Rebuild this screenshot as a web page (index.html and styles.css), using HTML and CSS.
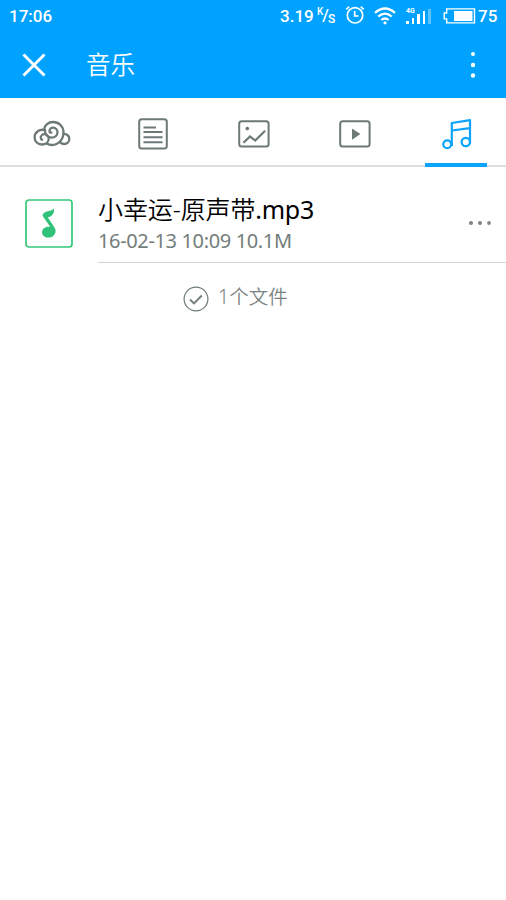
FILE: index.html
```html
<!DOCTYPE html>
<html lang="zh-CN">
<head>
<meta charset="utf-8">
<title>音乐</title>
<link rel="stylesheet" href="styles.css">
</head>
<body>
<div class="status">
  <span class="time">17:06</span>
  <span class="speed">3.19</span>
  <span class="unit"><span class="unit-k">K</span><span class="unit-slash">/</span><span class="unit-s">S</span></span>
  <svg class="alarm" width="20" height="20" viewBox="0 0 20 20" fill="none" stroke="#fff" stroke-width="1.7"><circle cx="10" cy="10.3" r="7.7"/><path d="M9.7 6v5h3.8M1.3 4.3 4.2 1.6M18.7 4.3l-2.9-2.7"/></svg>
  <svg class="wifi" width="22" height="18" viewBox="0 0 22 18" fill="none" stroke="#fff" stroke-width="2.2"><path d="M1 5.8Q11-2.8 21 5.8M4.2 9.5q6.8-5.600 13.600 0M7.300 13q3.700-3 7.400 0"/><circle cx="11" cy="15.800" r="1.600" fill="#fff" stroke="none"/></svg>
  <span class="signal"><span class="network">4G</span><i class="bar b1"></i><i class="bar b2"></i><i class="bar b3"></i><i class="bar b4"></i><i class="bar b5"></i></span>
  <svg class="battery" width="33" height="16" viewBox="0 0 33 16"><path d="M3.700.9h27.800v14H3.700v-4H1.200V5h2.500z" fill="none" stroke="#fff" stroke-width="1.400"/><path d="M11 3h18.500v10H11z" fill="#fff"/></svg>
  <span class="percent">75</span>
</div>
<header class="header">
  <svg width="24" height="24" viewBox="0 0 24 24" fill="none" stroke="#fff" stroke-width="2.900"><path d="m1.500 1.500 21 21m0-21-21 21"/></svg>
  <h1>音乐</h1>
  <svg class="more" width="6" height="28" viewBox="0 0 6 28" fill="#fff"><circle cx="3" cy="3" r="2"/><circle cx="3" cy="14" r="2.200"/><circle cx="3" cy="24.500" r="2.200"/></svg>
</header>
<nav class="tabs">
  <a class="tab"><svg width="38" height="28" viewBox="0 0 38 28" fill="none" stroke="#6d7977" stroke-width="2.300" stroke-linecap="round"><path d="M11 9.600C11.500 5 15.500 2 20 2c6 0 10.500 4.500 10.500 10.300 0 7-5 12.700-11.500 12.700-2 0-4-.6-5.500-1.500"/><path d="M12 10.100C6.500 8.600 1.600 12.300 1.600 17.500c0 4 3.200 7 7.200 7 4.100 0 6.900-2.500 6.900-5.700 0-2.700-1.900-4.600-4.200-4.600-2.200 0-3.800 1.600-3.800 3.400 0 1 .5 1.800 1.400 2.100"/><path d="M12 10.200c-.5 4.200 2.800 7.400 6.700 7.400 3.500 0 5.800-2.500 5.800-5.300 0-2.700-1.900-4.600-4.300-4.600-2.100 0-3.700 1.500-3.700 3.200 0 1.100.8 1.800 1.800 1.800"/><path d="M30.600 13.900c3.400.2 5.700 2.200 5.700 5.200 0 2.900-2.300 4.900-5.100 4.900-1.800 0-3-.6-4-1.800"/></svg></a>
  <a class="tab"><svg width="30" height="32" viewBox="0 0 30 32" fill="none" stroke="#6d7977" stroke-width="2"><rect x="1.200" y="1.200" width="27.600" height="29.300" rx="2.500"/><path d="M5.500 9.400H18M5.500 13.900h19M5.500 19.200h19M5.500 24.200h19"/></svg></a>
  <a class="tab"><svg width="32" height="28" viewBox="0 0 32 28" fill="none" stroke="#6d7977" stroke-width="2"><rect x="1.200" y="1.200" width="29.400" height="25.300" rx="2.500"/><path d="m5.400 22.800 6.600-6.400 5.200 4.200 9.900-9.900" stroke-width="2.200"/><circle cx="9.300" cy="8.600" r="1.800" fill="#6d7977" stroke="none"/></svg></a>
  <a class="tab"><svg width="32" height="28" viewBox="0 0 32 28" fill="none" stroke="#6d7977" stroke-width="2"><rect x="1.200" y="1.200" width="29.400" height="25.300" rx="2.500"/><path d="M13 8.500v11.200l8.400-5.600z" fill="#6d7977" stroke="none"/></svg></a>
  <a class="tab active"><svg width="30" height="32" viewBox="0 0 30 32" fill="none" stroke="#0ba3fb" stroke-width="2.200" stroke-linejoin="round"><circle cx="5.200" cy="26.300" r="3.900"/><circle cx="23.800" cy="24" r="4.200"/><path d="M9.800 28V5L28 2.200V25.500M9.800 12.500 28 10.200"/></svg></a>
</nav>
<main>
  <section class="file">
    <svg class="thumb" width="48" height="49" viewBox="0 0 48 49"><rect x="1" y="1" width="46" height="47" rx="3" fill="#fff" stroke="#34c878" stroke-width="1.700"/><path d="M17.500 16.800c.1-2 1.700-3.500 4.300-4.300 2.800-.8 5.700-1.100 7.200-3 .6 4.600-2.100 8.500-6.300 8.700l7.100 10.700c2.200 4-.4 9-5.300 9.600-4.300.5-7.500-2.100-7.500-5.300 0-3.500 3.500-6.200 8.200-5.400z" fill="#30c278"/></svg>
    <div class="details">
      <div class="text">
        <div class="name">小幸运-原声带<span class="ext">.mp3</span></div>
        <div class="meta">16-02-13 10:09 10.1M</div>
      </div>
      <svg width="24" height="6" viewBox="0 0 24 6" fill="#858585"><circle cx="3" cy="3" r="2.100"/><circle cx="12" cy="3" r="2.100"/><circle cx="21" cy="3" r="1.900"/></svg>
    </div>
  </section>
  <div class="summary">
    <svg width="26" height="26" viewBox="0 0 26 26" fill="none" stroke="#707c79"><circle cx="13" cy="13" r="11.900" stroke-width="1.200"/><path d="m7 13.500 4 4 7.800-8" stroke-width="1.800"/></svg>
    <span>1个文件</span>
  </div>
</main>
</body>
</html>
```

FILE: styles.css
```css
* { box-sizing: border-box; }
body { margin: 0; background: #fff; font-family: "Noto Sans", "Noto Sans CJK SC", sans-serif; }
svg { display: block; flex: none; }
.status { height: 32px; display: flex; align-items: center; padding-left: 9px; background: #00a2ff; color: #fff; font: 500 17px/32px Roboto, sans-serif; white-space: nowrap; }
.time { width: 271px; }
.speed { width: 37px; }
.unit { width: 19px; height: 20px; display: flex; font-size: 12px; line-height: 12px; }
.unit-k { font-size: 10px; }
.unit-slash { font-size: 17px; line-height: 19px; margin-left: -1px; }
.unit-s { padding-top: 7px; margin-left: -1px; }
.alarm { margin: -2px 0 0 9px; }
.wifi { margin-left: 9px; }
.signal { position: relative; display: flex; align-items: flex-end; gap: 3px; width: 25px; height: 16px; margin: 0 12px 0 10px; }
.network { position: absolute; left: 0; top: 0; font: bold 7px/7px Roboto, sans-serif; }
.bar { width: 2.500px; background: #fff; }
.b1 { height: 3px; } .b2 { height: 6px; } .b3 { height: 10px; } .b4 { height: 13px; }
.b5 { height: 15px; opacity: .35; }
.percent { margin-left: 2px; }
.header { height: 66px; display: flex; align-items: center; padding: 0 30px 0 22px; background: #00a2ff; color: #fff; }
h1 { margin: -2px 0 0 40px; font: 350 24.500px/36px "Noto Sans CJK SC", sans-serif; }
.more { margin-left: auto; }
.tabs { height: 69px; display: grid; grid-template-columns: repeat(5, 101px); padding-left: 1px; border-bottom: 2px solid #dedede; }
.tab { display: flex; height: 69px; padding-top: 3px; align-items: center; justify-content: center; }
.active { width: 62px; justify-self: center; border-bottom: 4px solid #0ba3fb; height: 69px; padding: 7px 0 0 3px; }
.file { height: 96px; display: flex; align-items: center; padding-left: 25px; }
.thumb { margin-top: 17px; }
.details { flex: 1; height: 96px; margin-left: 25px; padding: 17px 14px 0 0; display: flex; align-items: center; justify-content: space-between; border-bottom: 1px solid #d6d6d6; }
.text { white-space: nowrap; }
.name { font-size: 25px; font-weight: 350; line-height: 34px; letter-spacing: -.1px; color: #000; }
.ext { font-weight: 400; letter-spacing: -.3px; }
.meta { font-size: 20px; font-weight: 400; line-height: 29px; letter-spacing: -.36px; color: #737d7b; }
.summary { display: flex; align-items: center; gap: 9px; padding: 22px 0 0 183px; font-size: 19.500px; line-height: 28px; color: #7b8381; font-weight: 350; }
.summary svg { margin-top: 1px; }
.summary span { margin-top: -3px; }
```
